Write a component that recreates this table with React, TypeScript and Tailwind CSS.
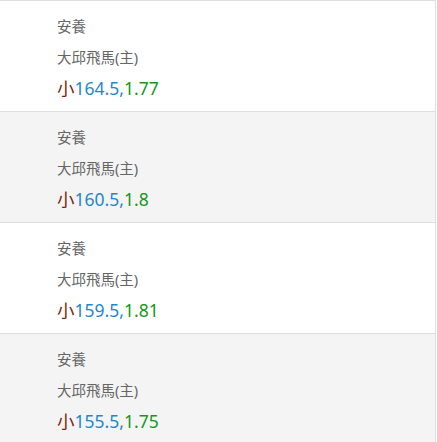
import React from "react";

const rows = [
  { total: "164.5", odds: "1.77" },
  { total: "160.5", odds: "1.8" },
  { total: "159.5", odds: "1.81" },
  { total: "155.5", odds: "1.75" },
];

export default function App() {
  return (
    <div
      className="w-[436px] border-t border-r border-[#dedede] bg-white"
      style={{ fontFamily: '"Noto Sans", "Noto Sans CJK TC", sans-serif' }}
    >
      {rows.map((r, i) => (
        <div
          key={i}
          className={`h-[111px] border-b border-[#dedede] pl-[57px] pt-[10px] ${
            i % 2 === 1 ? "bg-[#f4f4f4]" : "bg-white"
          }`}
        >
          <div className="h-[31px] leading-[31px] text-[14.5px] text-[#666666]">安養</div>
          <div className="h-[31px] leading-[31px] text-[14.5px] text-[#666666]">大邱飛馬(主)</div>
          <div className="h-[31px] leading-[31px] text-[17.5px]">
            <span className="text-[#7a1f0c]">小</span>
            <span className="text-[#1e88cc]">{r.total},</span>
            <span className="text-[#17981a]">{r.odds}</span>
          </div>
        </div>
      ))}
    </div>
  );
}
